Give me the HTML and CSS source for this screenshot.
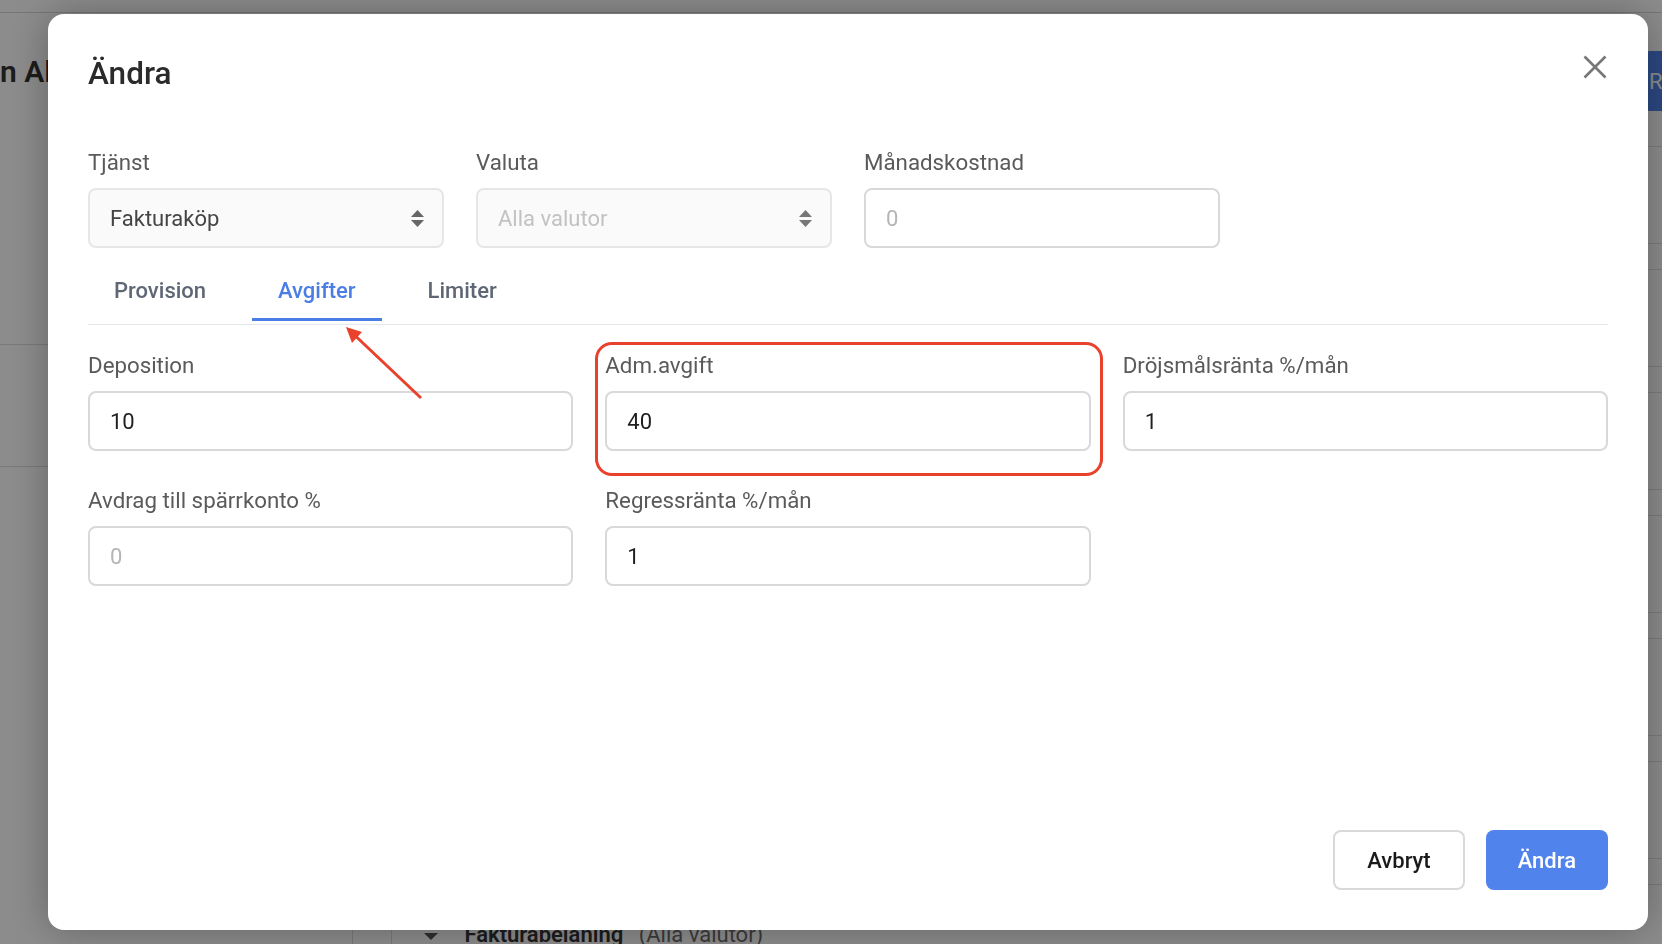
FILE: index.html
```html
<!DOCTYPE html>
<html>
<head>
  <meta name="viewport" content="width=device-width, initial-scale=1">
  <link rel="stylesheet" href="styles.css">
</head>
<body>

<!-- page behind the dialog -->
<div class="page">
  <div class="topbar"></div>
  <div class="page-head">
    <h1>n Alfa Finans</h1>
    <button class="page-btn">Registrera</button>
  </div>
  <div class="page-body">
    <div class="side">
      <div class="side-item tall"></div>
      <div class="side-item"></div>
    </div>
    <div class="table">
      <div class="row"></div><div class="subrow"></div>
      <div class="row"></div><div class="subrow"></div>
      <div class="row"></div><div class="subrow"></div>
      <div class="row"></div><div class="subrow"></div>
      <div class="row"></div><div class="subrow"></div>
      <div class="row"></div><div class="subrow"></div>
      <div class="group-row">
        <div class="expand-col"></div>
        <div class="group-name">
          <span class="caret"></span>
          <b>Fakturabelaning</b>
          <span class="muted">(Alla valutor)</span>
        </div>
      </div>
    </div>
  </div>
</div>

<!-- Edit dialog -->
<div class="backdrop">
  <div class="modal">
    <div class="modal-head">
      <h2>Ändra</h2>
      <button class="close" aria-label="Stäng">
        <svg width="26" height="26" viewBox="0 0 26 26">
          <path d="M2.5 2.5 L23.5 23.5 M23.5 2.5 L2.5 23.5" stroke="#777" stroke-width="2.6" fill="none"/>
        </svg>
      </button>
    </div>

    <div class="grid-4">
      <div class="field">
        <label>Tjänst</label>
        <div class="select">
          <span>Fakturaköp</span>
          <svg width="13" height="17" viewBox="0 0 13 17"><path d="M0 7 L6.5 0 L13 7 Z M0 10 L13 10 L6.5 17 Z" fill="#666"/></svg>
        </div>
      </div>
      <div class="field">
        <label>Valuta</label>
        <div class="select disabled">
          <span>Alla valutor</span>
          <svg width="13" height="17" viewBox="0 0 13 17"><path d="M0 7 L6.5 0 L13 7 Z M0 10 L13 10 L6.5 17 Z" fill="#777"/></svg>
        </div>
      </div>
      <div class="field">
        <label>Månadskostnad</label>
        <input type="text" placeholder="0">
      </div>
    </div>

    <div class="tabs">
      <a class="tab" href="#">Provision</a>
      <a class="tab active" href="#">Avgifter</a>
      <a class="tab" href="#">Limiter</a>
    </div>

    <div class="grid-3">
      <div class="field">
        <label>Deposition</label>
        <input type="text" value="10">
      </div>
      <div class="field highlight">
        <label>Adm.avgift</label>
        <input type="text" value="40">
      </div>
      <div class="field">
        <label>Dröjsmålsränta %/mån</label>
        <input type="text" value="1">
      </div>
      <div class="field">
        <label>Avdrag till spärrkonto %</label>
        <input type="text" placeholder="0">
      </div>
      <div class="field">
        <label>Regressränta %/mån</label>
        <input type="text" value="1">
      </div>
    </div>

    <div class="modal-footer">
      <button class="btn btn-cancel">Avbryt</button>
      <button class="btn btn-primary">Ändra</button>
    </div>

    <!-- annotation arrow pointing at the active tab -->
    <svg class="arrow" width="90" height="90" viewBox="0 0 90 90">
      <path d="M18 17.5 L83 79" stroke="#e8412c" stroke-width="3" fill="none"/>
      <path d="M8 8 L24 13 L14 24 Z" fill="#e8412c"/>
    </svg>
  </div>
</div>

</body>
</html>
```

FILE: styles.css
```css
body {
  margin: 0;
  font-family: Roboto, "Liberation Sans", Arial, sans-serif;
  width: 1662px;
  height: 944px;
  overflow: hidden;
  background: #fff;
  color: #333;
}

/* ---- background page ---- */
.page {
  width: 1900px;
}

.topbar {
  height: 12px;
  border-bottom: 1px solid #d8d8d8;
}

.page-head {
  display: flex;
  justify-content: space-between;
  align-items: flex-start;
  height: 133px;
}

.page-head h1 {
  margin: 41px 0 0 0;
  width: 62px;
  overflow: hidden;
  white-space: nowrap;
  font-size: 30px;
  font-weight: 600;
  color: #333;
}

.page-btn {
  margin: 38px 46px 0 0;
  height: 60px;
  width: 212px;
  padding: 0 7px;
  text-align: left;
  border: none;
  border-radius: 8px;
  background: #5083ec;
  color: #fff;
  font-family: inherit;
  font-size: 22px;
}

.page-body {
  display: flex;
}

.side {
  width: 352px;
  border-right: 1px solid #ddd;
}

.side-item {
  height: 121px;
  border-bottom: 1px solid #ddd;
}

.side-item.tall {
  height: 198px;
}

.table {
  flex: 1;
  border-top: 1px solid #e0e0e0;
}

.row {
  height: 96px;
  border-bottom: 1px solid #e0e0e0;
}

.subrow {
  height: 25px;
  border-bottom: 1px solid #e0e0e0;
}

.group-row {
  display: flex;
  height: 90px;
}

.expand-col {
  width: 38px;
  border-right: 1px solid #ddd;
}

.group-name {
  padding: 37px 0 0 32px;
  font-size: 22px;
  color: #333;
}

.group-name b {
  font-weight: 600;
  margin-right: 10px;
}

.group-name .muted {
  color: #6b6b6b;
}

.caret {
  display: inline-block;
  width: 0;
  height: 0;
  border-left: 7px solid transparent;
  border-right: 7px solid transparent;
  border-top: 7px solid #555;
  margin-right: 21px;
  vertical-align: middle;
}

/* ---- dialog ---- */
.backdrop {
  position: fixed;
  top: 0;
  left: 0;
  right: 0;
  bottom: 0;
  background: rgba(0, 0, 0, 0.45);
  padding: 14px 0 0 48px;
}

.modal {
  position: relative;
  box-sizing: border-box;
  width: 1600px;
  height: 916px;
  padding: 40px;
  background: #fff;
  border-radius: 16px;
  box-shadow: 0 0 40px rgba(0, 0, 0, 0.3);
  display: flex;
  flex-direction: column;
}

.modal-head {
  display: flex;
  justify-content: space-between;
  align-items: flex-start;
  margin-bottom: 56px;
}

.modal-head h2 {
  margin: 2px 0 0 0;
  font-size: 31.5px;
  line-height: 36px;
  font-weight: 500;
  color: #2b2b2b;
}

.close {
  width: 26px;
  height: 26px;
  padding: 0;
  border: none;
  background: none;
  cursor: pointer;
}

.close svg {
  display: block;
}

.grid-4 {
  display: grid;
  grid-template-columns: repeat(4, 1fr);
  column-gap: 32px;
}

.grid-3 {
  display: grid;
  grid-template-columns: repeat(3, 1fr);
  column-gap: 32px;
  row-gap: 35px;
  margin-top: 26px;
}

.field {
  display: flex;
  flex-direction: column;
}

.field label {
  font-size: 22.3px;
  line-height: 29px;
  color: #5a5a5a;
  margin-bottom: 11px;
}

.field input,
.select {
  box-sizing: border-box;
  height: 60px;
  width: 100%;
  border: 2px solid #d9d9d9;
  border-radius: 8px;
  padding: 0 20px;
  font-family: inherit;
  font-size: 22px;
  color: #1f1f1f;
  background: #fff;
  outline: none;
}

.field input::placeholder {
  color: #b5b5b5;
}

.select {
  display: flex;
  align-items: center;
  justify-content: space-between;
  background: #fafafa;
  border-color: #e6e6e6;
  color: #444;
  padding: 0 18px 0 20px;
}

.select svg {
  display: block;
}

.select.disabled {
  color: #c2c2c2;
}

/* red annotation frame */
.highlight {
  position: relative;
}

.highlight::after {
  content: '';
  position: absolute;
  top: -9px;
  left: -10px;
  right: -12px;
  bottom: -25px;
  border: 3px solid #e8412c;
  border-radius: 17px;
  pointer-events: none;
}

.tabs {
  display: flex;
  gap: 20px;
  margin-top: 16px;
  padding-bottom: 3px;
  border-bottom: 1px solid #e4e7ec;
}

.tab {
  padding: 12px 26px;
  font-size: 22px;
  line-height: 30px;
  font-weight: 500;
  color: #5f6675;
  text-decoration: none;
  border-bottom: 3px solid transparent;
}

.tab.active {
  color: #4a7ee6;
  border-bottom-color: #4a7ee6;
}

.modal-footer {
  margin-top: auto;
  display: flex;
  justify-content: flex-end;
  gap: 21px;
}

.btn {
  height: 60px;
  padding: 0 32px;
  border-radius: 8px;
  font-family: inherit;
  font-size: 22px;
  font-weight: 500;
  cursor: pointer;
}

.btn-cancel {
  background: #fff;
  border: 2px solid #d9d9d9;
  color: #1a1a1a;
}

.btn-primary {
  background: #5083ec;
  border: none;
  color: #fff;
}

.arrow {
  position: absolute;
  left: 290px;
  top: 305px;
}
```
